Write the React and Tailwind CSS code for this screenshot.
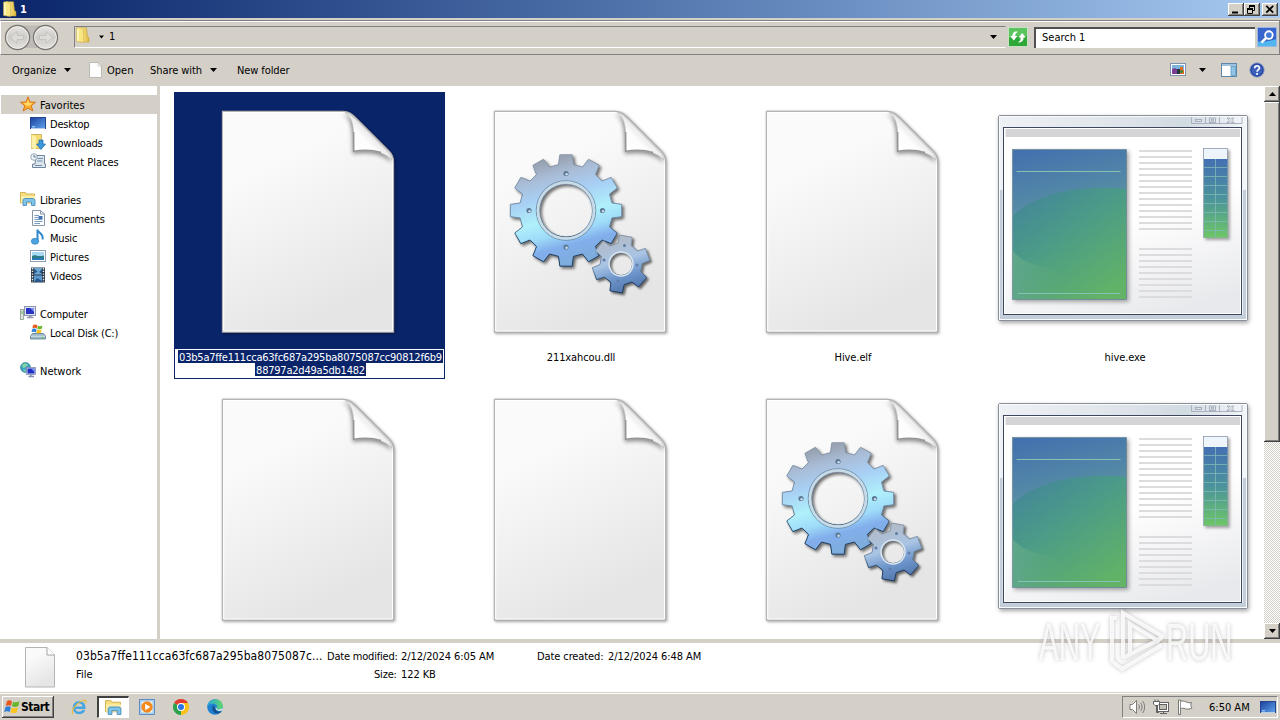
import React from 'react';

const RAISED =
  'bg-[#d4d0c8] shadow-[inset_-1px_-1px_0_#404040,inset_1px_1px_0_#ffffff,inset_-2px_-2px_0_#808080]';

const SIDEBAR = [
  { label: 'Favorites', icon: 'star', root: true, active: true },
  { label: 'Desktop', icon: 'desktop', tight: true },
  { label: 'Downloads', icon: 'downloads', tight: true },
  { label: 'Recent Places', icon: 'recent' },
  null,
  { label: 'Libraries', icon: 'libraries', root: true, tight: true },
  { label: 'Documents', icon: 'documents', tight: true },
  { label: 'Music', icon: 'music', tight: true },
  { label: 'Pictures', icon: 'pictures' },
  { label: 'Videos', icon: 'videos', tight: true },
  null,
  { label: 'Computer', icon: 'computer', root: true, tight: true },
  { label: 'Local Disk (C:)', icon: 'disk', tight: true },
  null,
  { label: 'Network', icon: 'network', root: true },
];

const FILES = [
  { name: ['03b5a7ffe111cca63fc687a295ba8075087cc90812f6b9', '88797a2d49a5db1482'], type: 'file', selected: true },
  { name: ['211xahcou.dll'], type: 'dll' },
  { name: ['Hive.elf'], type: 'file' },
  { name: ['hive.exe'], type: 'exe' },
  { name: [], type: 'file' },
  { name: [], type: 'file' },
  { name: [], type: 'dll' },
  { name: [], type: 'exe' },
];

/**
 * Shared gradients, referenced by id from the icons below
 */
function Gradients() {
  return (
    <svg className="absolute h-0 w-0" aria-hidden="true">
      <defs>
        <linearGradient id="paper" x1="0" y1="0" x2="0.4" y2="1">
          <stop offset="0" stopColor="#fafafa" />
          <stop offset="0.3" stopColor="#fafafa" />
          <stop offset="1" stopColor="#e5e5e5" />
        </linearGradient>
        <linearGradient id="curl" x1="0" y1="1" x2="0.7" y2="0.3">
          <stop offset="0" stopColor="#ffffff" />
          <stop offset="0.6" stopColor="#fdfdfd" />
          <stop offset="1" stopColor="#d0d0d0" />
        </linearGradient>
        <linearGradient id="gearBig" x1="0.35" y1="0" x2="0.62" y2="1">
          <stop offset="0" stopColor="#9299a5" />
          <stop offset="0.18" stopColor="#a9bcd6" />
          <stop offset="0.35" stopColor="#a8d0f5" />
          <stop offset="0.55" stopColor="#aff0fb" />
          <stop offset="0.68" stopColor="#9fdcf9" />
          <stop offset="0.8" stopColor="#82aeec" />
          <stop offset="1" stopColor="#7cadd8" />
        </linearGradient>
        <linearGradient id="gearSmall" x1="0.3" y1="0" x2="0.6" y2="1">
          <stop offset="0" stopColor="#b4b9c2" />
          <stop offset="0.45" stopColor="#a9c4e4" />
          <stop offset="0.7" stopColor="#7098cd" />
          <stop offset="1" stopColor="#4f74ab" />
        </linearGradient>
        <linearGradient id="gearEdge" x1="0" y1="0" x2="0" y2="1">
          <stop offset="0" stopColor="#8a97a8" />
          <stop offset="0.6" stopColor="#6d8aa6" />
          <stop offset="0.8" stopColor="#1f3c60" />
          <stop offset="1" stopColor="#1f3c60" />
        </linearGradient>
        <linearGradient id="frame" x1="0" y1="0" x2="1" y2="0">
          <stop offset="0" stopColor="#eef1f5" />
          <stop offset="0.4" stopColor="#e2e7ec" />
          <stop offset="0.75" stopColor="#d2dae2" />
          <stop offset="1" stopColor="#f4f7fa" />
        </linearGradient>
        <linearGradient id="client" x1="0.3" y1="0" x2="0.7" y2="1">
          <stop offset="0.5" stopColor="#ffffff" />
          <stop offset="1" stopColor="#e8e9ec" />
        </linearGradient>
        <linearGradient id="panel" x1="0.25" y1="0" x2="0.35" y2="0.6">
          <stop offset="0" stopColor="#4472ae" />
          <stop offset="0.55" stopColor="#5489a6" />
          <stop offset="1" stopColor="#6ba3a6" />
        </linearGradient>
        <linearGradient id="panelWave" x1="0.1" y1="0" x2="0.8" y2="1">
          <stop offset="0" stopColor="#42849a" />
          <stop offset="0.45" stopColor="#4c9c87" />
          <stop offset="1" stopColor="#62b366" />
        </linearGradient>
        <linearGradient id="panelFoot" x1="0" y1="0" x2="0.8" y2="0">
          <stop offset="0" stopColor="#62a78b" stopOpacity="0.9" />
          <stop offset="1" stopColor="#5cab70" stopOpacity="0" />
        </linearGradient>
        <linearGradient id="meter" x1="0" y1="0" x2="0" y2="1">
          <stop offset="0" stopColor="#4470b2" />
          <stop offset="0.5" stopColor="#4c939c" />
          <stop offset="1" stopColor="#6cc765" />
        </linearGradient>
        <linearGradient id="folder" x1="0" y1="0" x2="1" y2="0">
          <stop offset="0" stopColor="#fff3a8" />
          <stop offset="1" stopColor="#dcb63a" />
        </linearGradient>
        <linearGradient id="screen" x1="0" y1="0" x2="1" y2="1">
          <stop offset="0" stopColor="#1b3f9c" />
          <stop offset="1" stopColor="#5fa5ee" />
        </linearGradient>
        <linearGradient id="navButton" x1="0" y1="0" x2="0" y2="1">
          <stop offset="0" stopColor="#e6e4e1" />
          <stop offset="0.5" stopColor="#cfccc8" />
          <stop offset="1" stopColor="#e4e2df" />
        </linearGradient>
        <linearGradient id="edgeTop" x1="0" y1="0" x2="1" y2="0">
          <stop offset="0" stopColor="#2aa5e0" />
          <stop offset="1" stopColor="#5fd765" />
        </linearGradient>
      </defs>
    </svg>
  );
}

function Paper() {
  return (
    <>
      <path
        d="M40.500 17.500H161C167 17.500 170 20 175 25L207 57C210 60 211.500 63 211.500 68V238H40.500Z"
        fill="url(#paper)"
        stroke="#b4b4b4"
        strokeWidth="1.300"
        className="drop-shadow-[1px_1px_1.5px_rgba(0,0,0,0.4)]"
      />
      <path d="M41.700 237V18.500H161C166 18.500 169 21 174 26L206 58C209 61 210.500 64 210.500 68V237Z" fill="none" stroke="#fff" />
      <path
        d="M163 18.500C171 23 172.500 34 172 57.500C189 55 203 58 210 66C209 61 206 58 201 53L175 26.500C170 22 168 20 163 18.500Z"
        fill="url(#curl)"
        stroke="#b5b5b5"
        strokeWidth="0.600"
        className="drop-shadow-[-1px_2px_2px_rgba(0,0,0,0.45)]"
      />
      <path d="M171.600 38V57.300C181 55.800 190 55.800 199 58.500" fill="none" stroke="#949494" strokeWidth="1.400" />
    </>
  );
}

// Outline of a cog: each tooth is a trapezoid between the root and outer radius
function gearPath(cx, cy, outer, root, teeth, start) {
  const step = (Math.PI * 2) / teeth;
  const points = [];
  for (let i = 0; i < teeth; i++) {
    const a = (start * Math.PI) / 180 + i * step;
    [[-0.31, root], [-0.21, outer], [0.21, outer], [0.31, root]].forEach(([k, r]) => {
      points.push(`${(cx + r * Math.cos(a + k * step)).toFixed(2)} ${(cy + r * Math.sin(a + k * step)).toFixed(2)}`);
    });
  }
  return `M${points.join('L')}Z`;
}

function circlePath(cx, cy, r) {
  return `M${cx - r} ${cy}a${r} ${r} 0 1 0 ${2 * r} 0a${r} ${r} 0 1 0 ${-2 * r} 0Z`;
}

const BIG_GEAR = gearPath(112, 116.5, 56, 46.5, 12, -90) + circlePath(112, 116.5, 26.5);
const SMALL_GEAR = gearPath(167, 170, 29, 21, 6, -80) + circlePath(167, 170, 11.5);

function Gears() {
  return (
    <>
      <g className="drop-shadow-[2px_2px_1.5px_rgba(0,0,0,0.55)]">
        <path d={BIG_GEAR} fill="url(#gearBig)" fillRule="evenodd" stroke="url(#gearEdge)" strokeWidth="1" />
      </g>
      <circle cx="112" cy="116.500" r="29.800" fill="none" stroke="#6f8ca5" strokeWidth="0.900" />
      <circle cx="112" cy="116.500" r="28" fill="none" stroke="#c9dbe6" strokeWidth="2.400" />
      {[[112, 79.5], [148.5, 116.5], [112, 153], [75, 116.5]].map(([x, y]) => (
        <g key={`${x}-${y}`}>
          <circle cx={x} cy={y} r="2.600" fill="#5d7893" />
          <circle cx={x + 0.6} cy={y + 0.8} r="1.300" fill="#c4dcec" />
        </g>
      ))}
      <g className="drop-shadow-[2px_2px_1px_rgba(0,0,0,0.55)]">
        <path d={SMALL_GEAR} fill="url(#gearSmall)" fillRule="evenodd" stroke="url(#gearEdge)" strokeWidth="1" />
      </g>
      <circle cx="167" cy="170" r="12" fill="none" stroke="#dbe6f0" strokeWidth="1.500" />
      {[[170.5, 151.5], [183, 171], [164, 187], [150, 166]].map(([x, y]) => (
        <circle key={`${x}-${y}`} cx={x} cy={y} r="1.500" fill="#5f7da6" />
      ))}
    </>
  );
}

function AppWindow() {
  const lines = [
    ...Array.from({ length: 14 }, (_, i) => 56 + i * 6),
    ...Array.from({ length: 9 }, (_, i) => 154 + i * 6),
  ];
  return (
    <>
      <rect x="0.500" y="21.500" width="249" height="205" rx="1.500" fill="url(#frame)" stroke="#8a9099" className="drop-shadow-[1px_2px_2px_rgba(0,0,0,0.35)]" />
      <path d="M1.500 96H4.500V221H245V96H248.500V225.500H1.500Z" fill="#c4cedb" />
      <rect x="1.500" y="22.500" width="247" height="203" fill="none" stroke="#f8fafc" />
      <rect x="5.500" y="33.500" width="238" height="187" fill="url(#client)" stroke="#3d475e" />
      <rect x="6.500" y="34.500" width="236" height="185" fill="none" stroke="#fff" />
      <rect x="7.500" y="35" width="234.500" height="8" fill="#d5d5d7" />
      <g fill="none" stroke="#a3abb8" strokeWidth="0.900">
        <path d="M193.500 23V29.500H244V23M207.500 23V29.500M221.500 23V29.500" />
        <rect x="197.500" y="25.500" width="6" height="2" />
        <rect x="211.500" y="24" width="6" height="4.500" />
        <rect x="213.500" y="25.500" width="2" height="1.500" />
        <path d="M229 24l2 0 1.500 1.200 1.500-1.200 2 0-2 2.200 2 2.300-2 0-1.500-1.200-1.500 1.200-2 0 2-2.300Z" />
      </g>
      <rect x="14.500" y="55.500" width="114" height="150" fill="url(#panel)" stroke="#5f7f8a" strokeWidth="0.600" className="drop-shadow-[2px_2px_2px_rgba(0,0,0,0.35)]" />
      <path d="M15 122C35 102 75 90 128 95V205H15Z" fill="url(#panelWave)" />
      <path d="M15 157C22 166 34 172 55 174L85 205H15Z" fill="url(#panelFoot)" />
      <path d="M18.500 77.500H122.500M20 199.500H122.500" stroke="#86c1b4" strokeWidth="1" />
      {lines.map((y) => (
        <rect key={y} x="141" y={y} width="53" height="2" fill="#dcdcde" />
      ))}
      <g className="drop-shadow-[2px_2px_1.5px_rgba(0,0,0,0.35)]">
        <rect x="205.500" y="54.500" width="24" height="89" fill="#eef4fb" stroke="#8d9cae" strokeWidth="0.800" />
        <rect x="206" y="65" width="23.500" height="78.500" fill="url(#meter)" />
      </g>
      <path
        d="M206 73.500h23M206 82.500h23M206 91.500h23M206 100.500h23M206 109.500h23M206 118.500h23M206 127.500h23M206 136.500h23M217.500 65v78"
        stroke="#7fb9b5"
        strokeWidth="0.800"
      />
    </>
  );
}

function FileIcon({ type }) {
  return (
    <svg className="h-64 w-64 shrink-0 overflow-visible" viewBox="0 0 256 256">
      {type === 'exe' ? <AppWindow /> : <Paper />}
      {type === 'dll' && <Gears />}
    </svg>
  );
}

const SMALL_ICONS = {
  folder: (
    <>
      <path d="M5 .700H11.500L12.500 9.500 14 10.500V15H5Z" fill="url(#folder)" stroke="#c49c30" strokeWidth="0.500" />
      <path d="M1.500 1L5.500 .500 6.500 2 8.500 3V15.500L1.500 14.500Z" fill="#f8e682" stroke="#cba845" strokeWidth="0.500" />
      <path d="M3 2V14" stroke="#fff8c8" strokeWidth="1.500" />
    </>
  ),
  star: (
    <>
      <path d="M8 .8L10 6 15.500 6.300 11.300 9.700 12.800 15 8 12 3.200 15 4.700 9.700.5 6.300 6 6Z" fill="#fbae2c" stroke="#d8741a" strokeWidth="1" />
      <path d="M8 3.500L9.300 7 12.500 7.200 10 9.300 8 10 5.800 9.300 3.500 7.200 6.700 7Z" fill="#ffd968" />
    </>
  ),
  desktop: (
    <>
      <rect x="0.500" y="2.500" width="15" height="11" fill="url(#screen)" stroke="#24468f" />
      <path d="M1 13.500H15" stroke="#b8d0ee" />
      <rect x="2" y="11" width="3" height="1.500" fill="#8cc2f4" />
    </>
  ),
  downloads: (
    <>
      <path d="M1.500 .500H11.500V14.500H1.500Z" fill="#f3db77" stroke="#c29c38" strokeWidth="0.700" />
      <path d="M1.500 .500L6 3V15.500L1.500 14Z" fill="#fdf0a8" />
      <path d="M9 6H13V10H15.500L11 15.500 6.500 10H9Z" fill="#3c97dd" stroke="#1967ab" strokeWidth="0.700" />
    </>
  ),
  recent: (
    <>
      <path d="M6 2.500H14.500V11H15.500V14.500H2.500V11H5Z" fill="#dce5ed" stroke="#71869c" />
      <path d="M7.500 5.500H13M7 8H12.500M5 12.500H12" stroke="#6e8fae" />
      <circle cx="4" cy="4" r="3.300" fill="#eef4f9" stroke="#8395a8" strokeWidth="0.800" />
      <path d="M4 2V4H6" fill="none" stroke="#425a75" strokeWidth="0.800" />
    </>
  ),
  libraries: (
    <>
      <path d="M.5 1.500H5.500L6.500 3H14.500V12H.5Z" fill="#f7df7f" stroke="#cba543" strokeWidth="0.800" />
      <path d="M1 5H15V12H1Z" fill="#fbeea6" />
      <path d="M3 14.500V9.500C3 8 4 7.500 5 7.500H12C14 7.500 15 8 15 9.500V14.500H11.500V11H6.500V14.500Z" fill="#7ec3ea" stroke="#3f86b6" strokeWidth="0.800" />
    </>
  ),
  documents: (
    <>
      <path d="M2.500.500H10.500L14.500 4V15.500H2.500Z" fill="#fbfdff" stroke="#8797a8" />
      <path d="M10.500.500V4H14.500" fill="none" stroke="#8797a8" />
      <path d="M4.500 5.500H9M4.500 7.500H8M4.500 9.500H12.500M4.500 11.500H12.500M4.500 13.500H10" stroke="#7b9cc2" />
      <rect x="8.500" y="6" width="4" height="3" fill="#3d70b4" />
    </>
  ),
  music: (
    <>
      <path d="M7.500 .500V12M7.500 1C8.500 4 14 5 12.500 10.500" fill="none" stroke="#3288cc" strokeWidth="2" />
      <ellipse cx="5" cy="12.300" rx="3.700" ry="3" fill="#4ba3e0" stroke="#2576b8" strokeWidth="0.600" />
    </>
  ),
  pictures: (
    <>
      <rect x="0.500" y="2.500" width="15" height="11" fill="#fff" stroke="#8ba0b5" />
      <rect x="2" y="4" width="12" height="8" fill="#a8d9f4" />
      <path d="M2 8.500C5 5.500 7 9.500 14 7.500V12H2Z" fill="#2c7c84" />
      <path d="M2 10.500C6 9 10 10 14 9.500V12H2Z" fill="#2878b7" />
    </>
  ),
  videos: (
    <>
      <rect x="1" y="0.500" width="14" height="15" fill="#2c3846" />
      <rect x="4" y="1" width="8" height="6.500" fill="#6fa9d6" />
      <rect x="4" y="8.500" width="8" height="6.500" fill="#5a9bcd" />
      <path d="M4 1.500L7.500 4.500 4 7ZM12 2L9 5 12 7ZM4 15L7 11 12 14V15Z" fill="#28598a" />
      <path d="M2.500 1V15M13.500 1V15" stroke="#e8eef4" strokeWidth="1.400" strokeDasharray="1.400 1.300" />
    </>
  ),
  computer: (
    <>
      <rect x="0.500" y="4.500" width="3" height="10" fill="#dfe6e2" stroke="#8b988e" strokeWidth="0.800" />
      <path d="M2 6V9" stroke="#58b24c" />
      <rect x="4.500" y="1.500" width="11" height="9" fill="#dfe3f2" stroke="#8a94b6" />
      <rect x="6" y="3" width="8" height="6" fill="#2733c4" />
      <path d="M10 3H14V7Z" fill="#7d92ee" />
      <path d="M7 12.500H13.500M9 11H11.500" stroke="#8f98ac" strokeWidth="1.500" />
    </>
  ),
  disk: (
    <>
      <path d="M2.500 9.500H13.500L15.500 12V15H.5V12Z" fill="#9cb9c9" stroke="#5c7b8c" strokeWidth="0.800" />
      <path d="M.8 12.200H15.200" stroke="#d8e6ee" />
      <path d="M3 1C5 0 6 .5 7.500 1.500L6.800 4.500C5.500 3.500 4 3.500 2.500 4.200Z" fill="#e85b1c" />
      <path d="M8 1.800C9.500 2.500 11 2.500 12.500 1.500L11.800 4.800C10 5.500 8.500 5.300 7.300 4.700Z" fill="#6cb82a" />
      <path d="M2.300 5C4 4.300 5.500 4.500 6.600 5.300L6 8.500C4.500 7.500 3 7.500 1.500 8.200Z" fill="#2f83dc" />
      <path d="M7.100 5.500C8.500 6.200 10 6.200 11.600 5.500L11 8.800C9 9.500 7.800 9.300 6.500 8.700Z" fill="#fbc21c" />
      <rect x="11.500" y="13" width="2" height="1" fill="#4fd04a" />
    </>
  ),
  network: (
    <>
      <circle cx="5.500" cy="5.500" r="5" fill="#3f9fc4" stroke="#2a7a8c" strokeWidth="0.600" />
      <path d="M2 3C4 1 7 1 8 3 6 4 5 6 3 6ZM3 8C5 7 6 8 6 10Z" fill="#7fd6a0" />
      <rect x="6.500" y="5.500" width="9" height="7" fill="#d4daf0" stroke="#7f8ab0" strokeWidth="0.800" />
      <rect x="7.500" y="6.500" width="7" height="5" fill="#1d2fc6" />
      <path d="M11 6.500H14.500V10Z" fill="#7e97ef" />
      <path d="M8.500 14.500H14M11 12.500V14.500" stroke="#7f8ab0" strokeWidth="1.300" />
    </>
  ),
  file: (
    <>
      <path d="M1.500 .500H10L13.500 4V15.500H1.500Z" fill="#fdfdfd" stroke="#b5b5b0" strokeWidth="0.900" />
      <path d="M10 .500V4H13.500" fill="none" stroke="#c4c4c0" strokeWidth="0.700" />
    </>
  ),
  views: (
    <>
      <rect x="0.500" y="1.500" width="15" height="12" fill="#fff" stroke="#7d93ad" />
      <rect x="2" y="3" width="12" height="9" fill="#7cb4dc" />
      <path d="M2 7L5 6 8 8V12H2Z" fill="#7a3f94" />
      <path d="M7 7H10V12H7Z" fill="#26343c" />
      <path d="M10 5H13V8H14V12H10Z" fill="#e46a2a" />
      <circle cx="11.500" cy="9.500" r="1.500" fill="#2f8b3c" />
    </>
  ),
  preview: (
    <>
      <rect x="0.500" y="1.500" width="15" height="13" fill="#fff" stroke="#5e87ac" />
      <path d="M1 3H15" stroke="#9fc3df" strokeWidth="2" />
      <rect x="10" y="4.500" width="4.500" height="9" fill="#8fc6e6" stroke="#4f8bb8" strokeWidth="0.700" />
    </>
  ),
  help: (
    <>
      <circle cx="8" cy="8" r="7.300" fill="#3c60bc" stroke="#a2acc4" />
      <circle cx="8" cy="8" r="6" fill="none" stroke="#20398c" strokeWidth="0.800" />
      <path d="M5.700 6.200C5.700 3.200 10.500 3.200 10.400 6 10.300 7.700 8.200 7.800 8.100 9.800" fill="none" stroke="#fff" strokeWidth="1.700" />
      <circle cx="8.100" cy="12" r="1.100" fill="#fff" />
    </>
  ),
  refresh: (
    <>
      <rect width="16" height="16" fill="#2fa83a" />
      <path d="M0 0H16V7C10 9 5 6 0 9Z" fill="#5cc45f" />
      <path d="M1 7L4.300 11 7.500 7H5.500C5.500 5 6.500 4 8 3.500 5 2.500 3 4 3 7Z" fill="#fff" />
      <path d="M15 8.500L11.700 4.500 8.500 8.500H10.300C10.500 11 9.500 12 8 12.800 11 13.500 13 11.500 13 8.500Z" fill="#fff" />
    </>
  ),
  search: (
    <>
      <rect width="16" height="16" fill="#3763cc" />
      <path d="M0 16V12C6 13 11 11 16 10V16Z" fill="#4fb6ee" />
      <path d="M7.500 8.500L3 13" stroke="#fff" strokeWidth="2.200" />
      <circle cx="9.700" cy="6.300" r="3.400" fill="#4379dc" stroke="#fff" strokeWidth="1.600" />
    </>
  ),
  windows: (
    <>
      <path d="M3 2C5 .8 6.500 1.300 8 2.200L7 7C5.500 6 3.800 6 1.800 6.800Z" fill="#e8561e" />
      <path d="M9 2.700C11 3.800 13 3.500 15.500 2L14.300 7C12 8.200 10 8.200 8 7.300Z" fill="#67b52c" />
      <path d="M1.500 7.900C3.500 7 5.200 7.200 6.800 8.100L5.700 13C4 12 2.200 12 .2 12.900Z" fill="#2d7fd8" />
      <path d="M7.700 8.500C9.800 9.500 11.800 9.300 14 8.200L12.800 13.200C10.500 14.400 8.500 14.200 6.600 13.400Z" fill="#fcc41c" />
    </>
  ),
  ie: (
    <>
      <path d="M13 11C12 13 10 14 8 14 5 14 3 11.500 3 8.700S5 3.300 8 3.300 13 5.500 13.200 8.800H4" fill="none" stroke="#45a5e2" strokeWidth="2.600" />
      <path d="M2 15C-1 13 5 4 12 1.500 15 .3 15.500 2 14.300 4.500" fill="none" stroke="#e5bb3c" strokeWidth="1.200" />
    </>
  ),
  wmp: (
    <>
      <rect x="0.500" y="0.500" width="15" height="15" fill="#c3dcf2" stroke="#5c8fc4" />
      <rect x="2" y="2" width="12" height="12" fill="#eef5fb" stroke="#7ba7d1" strokeWidth="0.600" />
      <circle cx="8" cy="8" r="5.700" fill="#f48a1d" />
      <path d="M6.200 4.800L11.300 8 6.200 11.200Z" fill="#fff" />
    </>
  ),
  chrome: (
    <>
      <path d="M8 8L1.070 4A8 8 0 0 1 14.930 4Z" fill="#e33b2e" />
      <path d="M8 8L14.930 4A8 8 0 0 1 8 16Z" fill="#fbc116" />
      <path d="M8 8L8 16A8 8 0 0 1 1.070 4Z" fill="#2da14c" />
      <path d="M8 4H14.930L11.500 10Z" fill="#fbc116" />
      <circle cx="8" cy="8" r="4" fill="#fff" />
      <circle cx="8" cy="8" r="3" fill="#2f74e4" />
    </>
  ),
  edge: (
    <>
      <circle cx="8" cy="8" r="7.800" fill="#1f7fd0" />
      <path d="M.3 7.500C1 2.500 5 .2 8.300.2 13 .2 15.800 4 15.800 7 15.800 9.500 13.800 10.500 12 10.500 10 10.500 9.300 9.800 9.800 9 11 6.500 8.500 4.800 6 4.800 3.500 4.800 1.500 6 .3 7.500Z" fill="url(#edgeTop)" />
      <path d="M6.300 6.500C4 9.500 6 14.500 10.500 14.500 12.500 14.500 14 13.500 14.800 12.300 11 13.500 8 11.500 8.300 8.500Z" fill="#14508f" />
      <path d="M9.800 9C9.300 9.800 10 10.600 12 10.500 13.600 10.500 15 9.700 15.600 8.500L15.400 11C13 13 8.300 12.300 8.500 8.300Z" fill="#e2eef2" />
    </>
  ),
  speaker: (
    <g fill="none" stroke="#6f6f6c" strokeWidth="0.900">
      <path d="M1 5.500H3.500L7.500 1.500V14.500L3.500 10.500H1Z" fill="#fff" />
      <path d="M9.500 5.500C10.700 7 10.700 9 9.500 10.500M11.500 3.800C13.500 6 13.500 10 11.500 12.200M13.500 2C16.300 5 16.300 11 13.500 14" />
    </g>
  ),
  lan: (
    <g fill="#fff" stroke="#555" strokeWidth="0.900">
      <rect x="4.500" y="3.500" width="11" height="9" />
      <rect x="6.500" y="5.500" width="7" height="5" fill="#c4c0b8" />
      <path d="M7 14.500H14M10.500 12.500V14.500" />
      <path d="M3.500 6V13.500H6M2 .500V3M5 .500V3" fill="none" />
      <path d="M.500 2.500H6.500V5L5 6.500H2L.500 5Z" />
    </g>
  ),
  flag: (
    <>
      <path d="M1.500 1V15.500H3.500V9.500C7 8 9 12 15 9 13.500 7 13.500 5.500 14.500 3.500 10 5 7.500.5 3.500 2.500V1Z" fill="#fff" stroke="#6b6b68" strokeWidth="0.900" />
      <path d="M3.500 3V9.500" stroke="#6b6b68" strokeWidth="0.700" />
    </>
  ),
};

function Icon({ name, className = 'h-4 w-4' }) {
  return (
    <svg className={`${className} shrink-0`} viewBox="0 0 16 16">
      {SMALL_ICONS[name]}
    </svg>
  );
}

function Caret({ className = 'w-[7px]' }) {
  return (
    <svg className={`h-1 shrink-0 ${className}`} viewBox="0 0 7 4">
      <path d="M0 0H7L3.500 4Z" fill="#000" />
    </svg>
  );
}

function TitleBar() {
  return (
    <div className="flex h-[18px] shrink-0 items-center bg-gradient-to-r from-[#0a246a] to-[#a6caf0] pl-0.5 pr-0.5">
      <Icon name="folder" />
      <span className="ml-0.5 text-[11px] font-bold text-white">1</span>
      <div className="ml-auto flex pt-px">
        <div className={`h-[13px] w-4 ${RAISED}`}>
          <svg className="h-[14px] w-4" viewBox="0 0 16 14"><path d="M4 9.500H10" stroke="#000" strokeWidth="2" /></svg>
        </div>
        <div className={`h-[13px] w-4 ${RAISED}`}>
          <svg className="h-[14px] w-4" viewBox="0 0 16 14">
            <path d="M5 3H11M3 6H9" stroke="#000" strokeWidth="2" />
            <path d="M5.500 3V5M10.500 3V7.500H9M3.500 6V10.500H8.500V6" fill="none" stroke="#000" />
          </svg>
        </div>
        <div className={`ml-0.5 h-[13px] w-4 ${RAISED}`}>
          <svg className="h-[14px] w-4" viewBox="0 0 16 14"><path d="M4.300 2.800L11.200 9.700M11.200 2.800L4.300 9.700" stroke="#000" strokeWidth="1.700" /></svg>
        </div>
      </div>
    </div>
  );
}

function NavButtons() {
  return (
    <svg className="h-7 w-14 shrink-0" viewBox="0 0 56 28">
      <path d="M12 2.500H44V9C36 12 36 20 40 25H15C22 20 20 12 12 9Z" fill="#b5b2ae" opacity="0.700" />
      {[13.5, 41.5].map((cx) => (
        <g key={cx}>
          <circle cx={cx} cy="14.500" r="12" fill="url(#navButton)" stroke="#77746f" strokeWidth="1.300" />
          <circle cx={cx} cy="14.500" r="10.800" fill="none" stroke="#f1f0ee" />
        </g>
      ))}
      <path d="M6.500 14.500L13 8.500V12.500H19.500V16.500H13V20.500Z" fill="#dedcd9" stroke="#bfbcb8" strokeWidth="0.800" />
      <path d="M48.500 14.500L42 8.500V12.500H35.500V16.500H42V20.500Z" fill="#dedcd9" stroke="#bfbcb8" strokeWidth="0.800" />
    </svg>
  );
}

function AddressBar() {
  return (
    <div className="flex h-[37px] shrink-0 items-center border-b border-t border-b-white border-t-[#d4d0c8] pt-px">
      <div className="flex h-[35px] w-full items-center border-b border-l border-r border-t border-b-[#808080] border-l-white border-r-[#808080] border-t-[#808080] pl-[3px] shadow-[inset_0_1px_0_#fff]">
        <NavButtons />
        <div className="ml-3.5 flex h-[22px] w-[932px] items-center border border-b-white border-l-[#808080] border-r-[#d4d0c8] border-t-[#808080]">
          <Icon name="folder" className="mb-1 h-4 w-4" />
          <Caret className="ml-2 w-[5px]" />
          <span className="ml-[5px] pb-0.5">1</span>
          <Caret className="ml-auto mr-2 w-[7px]" />
        </div>
        <div className="ml-0.5 flex h-5 w-5 items-center justify-center border border-[#c6e2c2]">
          <Icon name="refresh" className="h-[18px] w-[18px]" />
        </div>
        <div className="ml-1.5 flex h-[21px] w-[221px] items-center border-l-2 border-t-2 border-[#505050] bg-white pb-0.5 pl-1.5">Search 1</div>
        <div className="ml-0.5 flex h-5 w-5 items-center justify-center border border-[#9bb5e4]">
          <Icon name="search" className="h-[18px] w-[18px]" />
        </div>
      </div>
    </div>
  );
}

function Toolbar() {
  return (
    <div className="flex h-[31px] shrink-0 items-center pb-px pl-3 pr-[15px]">
      <span className="w-[52px]">Organize</span>
      <Caret />
      <Icon name="file" className="ml-[17px] h-4 w-4" />
      <span className="ml-[3px] w-[43px]">Open</span>
      <span className="w-[60px] tracking-[-0.08px]">Share with</span>
      <Caret />
      <span className="ml-5 tracking-[-0.1px]">New folder</span>
      <Icon name="views" className="ml-auto h-4 w-4" />
      <Caret className="ml-[13px] w-[7px]" />
      <Icon name="preview" className="ml-[15px] h-4 w-4" />
      <Icon name="help" className="ml-3 h-4 w-4" />
    </div>
  );
}

function Sidebar() {
  return (
    <div className="w-[157px] shrink-0 pl-px pt-[9px]">
      {SIDEBAR.map((item, i) =>
        item ? (
          <div
            key={item.label}
            className={`flex h-[19px] items-center ${item.root ? 'pl-[19px]' : 'pl-[29px]'} ${item.active ? 'bg-[#d4d0c8]' : ''}`}
          >
            <Icon name={item.icon} className="mb-px h-4 w-4" />
            <span className={`ml-1 pt-0.5 ${item.tight ? 'tracking-[-0.2px]' : ''}`}>{item.label}</span>
          </div>
        ) : (
          <div key={i} className="h-[19px]" />
        )
      )}
    </div>
  );
}

function FileTile({ name, type, selected }) {
  return (
    <div className={`flex h-[287px] w-[271px] flex-col items-center pt-0.5 ${selected ? 'bg-[#0a246a]' : ''}`}>
      <FileIcon type={type} />
      {selected ? (
        <div className="mt-[-1px] flex h-[29px] w-[269px] flex-col items-center bg-white pl-0.5 pt-px text-white">
          {name.map((line) => (
            <span key={line} className="h-[13px] whitespace-nowrap bg-[#0a246a] px-px leading-[15px] tracking-[-0.22px]">
              {line}
            </span>
          ))}
        </div>
      ) : (
        <span className="mr-px pt-px leading-[13px] tracking-[-0.1px]">{name[0]}</span>
      )}
    </div>
  );
}

function ScrollBar() {
  return (
    <div className="flex w-4 shrink-0 flex-col bg-[repeating-conic-gradient(#ffffff_0_25%,#d4d0c8_0_50%)] bg-[length:2px_2px]">
      <div className={`flex h-4 items-center justify-center ${RAISED}`}>
        <Caret className="w-[7px] rotate-180" />
      </div>
      <div className={`h-[340px] ${RAISED}`} />
      <div className={`mt-auto flex h-4 items-center justify-center ${RAISED}`}>
        <Caret />
      </div>
    </div>
  );
}

function DetailsPane() {
  return (
    <div className="flex h-[49px] shrink-0 bg-white pl-6 pt-1 leading-[18px]">
      <svg className="h-[42px] w-8" viewBox="0 0 32 42">
        <path d="M1.500 .500H23L30.500 8V40H1.500Z" fill="url(#paper)" stroke="#b4b4b4" />
        <path d="M23 .500V8H30.500" fill="#fff" stroke="#a4a4a4" />
      </svg>
      <div className="ml-5 w-[246px] whitespace-nowrap">
        <div className="text-xs leading-[18px] tracking-[0.08px]">03b5a7ffe111cca63fc687a295ba8075087c...</div>
        <div className="pt-px">File</div>
      </div>
      <div className="w-[76px] whitespace-nowrap pl-[5px] pt-px">
        <div className="tracking-[-0.2px]">Date modified:</div>
        <div className="pl-[47px] tracking-[-0.2px]">Size:</div>
      </div>
      <div className="w-[139px] whitespace-nowrap pl-[3px] pt-px tracking-[-0.08px]">
        <div>2/12/2024 6:05 AM</div>
        <div>122 KB</div>
      </div>
      <div className="w-[71px] whitespace-nowrap pt-px tracking-[-0.1px]">Date created:</div>
      <div className="whitespace-nowrap pt-px tracking-[-0.08px]">2/12/2024 6:48 AM</div>
    </div>
  );
}

function TaskBar() {
  return (
    <div className="flex h-7 shrink-0 items-center border-t border-[#d4d0c8] pl-0.5 pr-0.5 pt-px shadow-[inset_0_1px_0_#fff]">
      <div className={`flex h-[22px] w-[52px] items-center pl-0.5 text-xs font-bold ${RAISED}`}>
        <Icon name="windows" />
        <span className="ml-px tracking-[-0.5px]">Start</span>
      </div>
      <Icon name="ie" className="ml-[17px] h-4 w-4" />
      <div className="ml-2.5 flex h-[22px] w-8 items-center justify-center border-b border-l-2 border-r border-t-2 border-b-white border-l-[#404040] border-r-white border-t-[#404040] bg-white">
        <Icon name="libraries" className="h-[17px] w-[17px]" />
      </div>
      <Icon name="wmp" className="ml-2.5 h-4 w-4" />
      <Icon name="chrome" className="ml-[18px] h-4 w-4" />
      <Icon name="edge" className="ml-[18px] h-4 w-4" />
      <div className="ml-auto flex h-[22px] w-[156px] items-center border border-b-white border-l-[#808080] border-r-white border-t-[#808080] pl-1.5">
        <Icon name="speaker" />
        <Icon name="lan" className="ml-2 h-4 w-4" />
        <Icon name="flag" className="ml-2 h-4 w-4" />
        <span className="ml-4 w-[51px] whitespace-nowrap">6:50 AM</span>
        <Icon name="desktop" />
      </div>
    </div>
  );
}

function Watermark() {
  return (
    <svg className="absolute left-[1030px] top-[604px] h-[80px] w-[230px] overflow-visible" viewBox="0 0 230 80">
      <g
        fill="#ffffff"
        fillOpacity="0.800"
        fontFamily="'Liberation Sans', sans-serif"
        fontSize="52"
        className="drop-shadow-[0_0_2px_rgba(0,0,0,0.3)]"
      >
        <text transform="translate(9 56) scale(0.57 1)">ANY</text>
        <text transform="translate(136 56) scale(0.59 1)">RUN</text>
        <g fill="none" stroke="#fff" strokeOpacity="0.800" strokeWidth="4">
          <path d="M87 14H82V57L92 65 132 41" />
          <path d="M93 54V9L132 32 128 37 100 20V50L93 54 132 34" />
        </g>
      </g>
    </svg>
  );
}

export default function App() {
  return (
    <div className="relative flex h-[720px] w-[1280px] flex-col overflow-hidden bg-[#d4d0c8] font-['DejaVu_Sans_Condensed','DejaVu_Sans',sans-serif] text-[11px] leading-[13px] text-black">
      <Gradients />
      <TitleBar />
      <AddressBar />
      <Toolbar />
      <div className="flex h-[553px] shrink-0 bg-white">
        <Sidebar />
        <div className="w-[3px] shrink-0 bg-[#d4d0c8]" />
        <div className="grid flex-1 auto-rows-[288px] grid-cols-[repeat(4,272px)] content-start overflow-hidden pl-3.5 pt-1.5">
          {FILES.map((file, i) => (
            <FileTile key={i} {...file} />
          ))}
        </div>
        <ScrollBar />
      </div>
      <div className="h-1 shrink-0" />
      <DetailsPane />
      <TaskBar />
      <Watermark />
    </div>
  );
}
